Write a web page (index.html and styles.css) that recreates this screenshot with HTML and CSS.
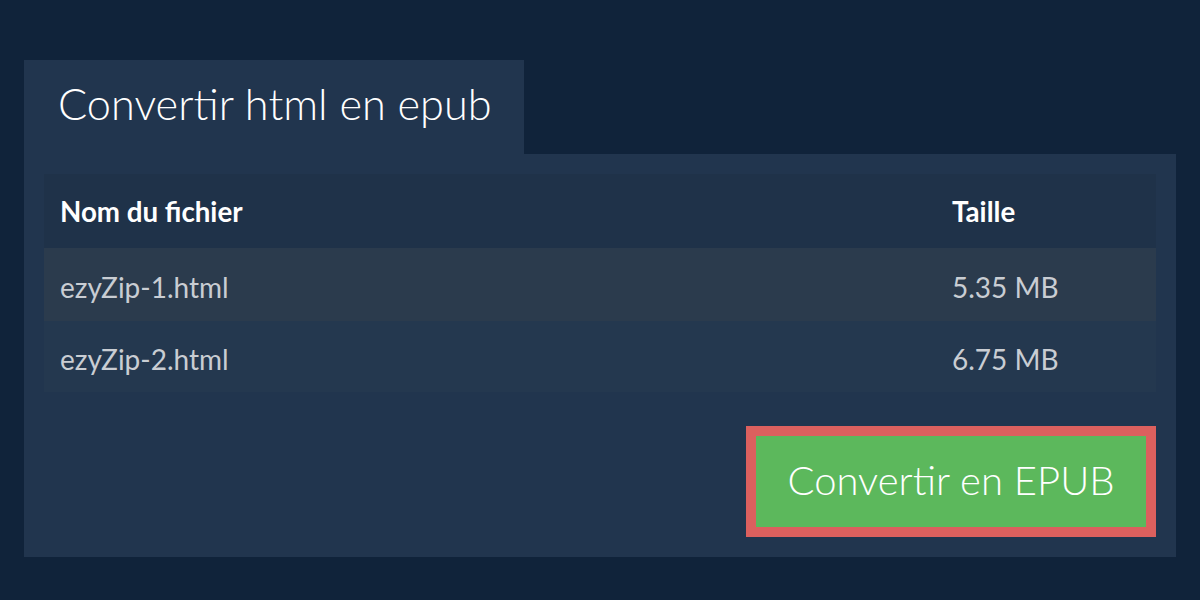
FILE: index.html
```html
<!DOCTYPE html>
<html lang="fr">
<head>
<meta charset="utf-8">
<title>Convertir html en epub</title>
<link rel="stylesheet" href="styles.css">
</head>
<body>
<div class="page">
  <div class="tab"><h1 class="title">Convertir html en epub</h1></div>
  <div class="panel">
    <div class="table">
      <div class="row head"><div class="c-name">Nom du fichier</div><div class="c-size">Taille</div></div>
      <div class="row odd"><div class="c-name">ezyZip-1.html</div><div class="c-size">5.35 MB</div></div>
      <div class="row even"><div class="c-name">ezyZip-2.html</div><div class="c-size">6.75 MB</div></div>
    </div>
    <div class="actions">
      <button class="convert">Convertir en EPUB</button>
    </div>
  </div>
</div>
</body>
</html>
```
FILE: styles.css
```css
html, body {
  margin: 0;
  padding: 0;
  background: #10233a;
  font-family: Lato, "Open Sans", sans-serif;
}
.page {
  padding: 60px 24px 0 24px;
}
.tab {
  width: 500px;
  height: 94px;
  background: #21354e;
  box-sizing: border-box;
  padding-left: 34px;
  display: flex;
  align-items: center;
}
.title {
  margin: 0;
  font-weight: 300;
  font-size: 43.3px;
  color: #ffffff;
  line-height: 1;
  padding-bottom: 6px;
}
.panel {
  background: #21354e;
  padding: 20px;
  height: 403px;
  box-sizing: border-box;
}
.table {
  display: flex;
  flex-direction: column;
}
.row {
  display: flex;
  align-items: center;
  height: 73px;
  padding-left: 16px;
  font-size: 28px;
  color: #c9cdd3;
}
.row.head {
  height: 74px;
  background: #1f3249;
  font-weight: 700;
  color: #ffffff;
  font-size: 27.7px;
}
.row.odd { background: #2b3b4d; padding-top: 4px; box-sizing: border-box; }
.row.even { background: #24384f; height: 71px; padding-top: 4px; box-sizing: border-box; }
.c-name { width: 892px; }
.c-size { flex: 1; }
.actions {
  display: flex;
  justify-content: flex-end;
  margin-top: 34px;
}
.convert {
  width: 410px;
  height: 111px;
  border: 10px solid #dc605e;
  background: #5cb85c;
  color: #ffffff;
  font-family: Lato, "Open Sans", sans-serif;
  font-size: 40px;
  font-weight: 300;
  padding: 0 0 4px 0;
  box-sizing: border-box;
}
```
